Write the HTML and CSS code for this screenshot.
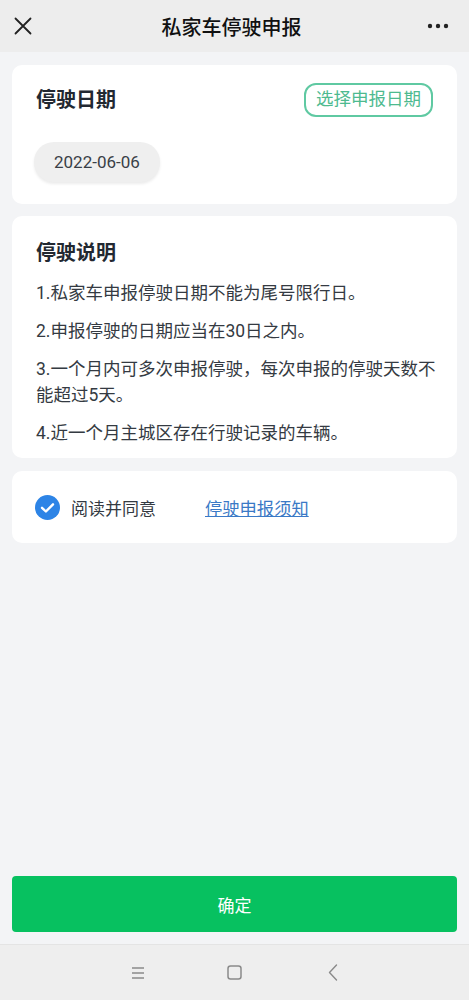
FILE: index.html
```html
<!DOCTYPE html>
<html>
<head>
    <meta charset="utf-8">
    <title>私家车停驶申报</title>
    <link rel="stylesheet" href="styles.css">
</head>
<body>
    <div class="page">
        <div class="topbar">
            <span class="close-icon">
                <svg width="18" height="18" viewBox="0 0 18 18"><path d="M1.5 1.5 L16.5 16.5 M16.5 1.5 L1.5 16.5" stroke="#222" stroke-width="1.8" fill="none" stroke-linecap="round"/></svg>
            </span>
            <div class="topbar-title">私家车停驶申报</div>
            <span class="more-icon">
                <svg width="22" height="6" viewBox="0 0 22 6"><circle cx="3" cy="3" r="2.2" fill="#222"/><circle cx="11" cy="3" r="2.2" fill="#222"/><circle cx="19" cy="3" r="2.2" fill="#222"/></svg>
            </span>
        </div>

        <div class="content">
            <div class="card date-card">
                <div class="card-row">
                    <div class="card-title">停驶日期</div>
                    <button class="pick-btn">选择申报日期</button>
                </div>
                <div class="date-pill">2022-06-06</div>
            </div>

            <div class="card notes-card">
                <div class="card-title">停驶说明</div>
                <p>1.私家车申报停驶日期不能为尾号限行日。</p>
                <p>2.申报停驶的日期应当在30日之内。</p>
                <p>3.一个月内可多次申报停驶，每次申报的停驶天数不能超过5天。</p>
                <p>4.近一个月主城区存在行驶记录的车辆。</p>
            </div>

            <div class="card agree-card">
                <span class="check">
                    <svg width="25" height="25" viewBox="0 0 25 25"><circle cx="12.5" cy="12.5" r="12.5" fill="#2d84e6"/><path d="M7 12.8 L10.9 16.5 L18 9.3" stroke="#fff" stroke-width="2.4" fill="none" stroke-linecap="round" stroke-linejoin="round"/></svg>
                </span>
                <span class="agree-text">阅读并同意</span>
                <a class="agree-link" href="#">停驶申报须知</a>
            </div>
        </div>

        <div class="footer">
            <button class="confirm-btn">确定</button>
        </div>

        <div class="navbar">
            <svg class="nav-menu" width="14" height="14" viewBox="0 0 14 14"><path d="M1 2 H13 M1 7 H13 M1 12 H13" stroke="#8a8a8a" stroke-width="1.4" fill="none"/></svg>
            <svg class="nav-home" width="15" height="15" viewBox="0 0 15 15"><rect x="1" y="1" width="13" height="13" rx="2.5" stroke="#8a8a8a" stroke-width="1.5" fill="none"/></svg>
            <svg width="10" height="17" viewBox="0 0 10 17"><path d="M8.5 1 L1.5 8.5 L8.5 16" stroke="#8a8a8a" stroke-width="1.4" fill="none" stroke-linecap="round" stroke-linejoin="round"/></svg>
        </div>
    </div>
</body>
</html>
```

FILE: styles.css
```css
* {
    box-sizing: border-box;
}
body {
    margin: 0;
    background: #f3f4f6;
    font-family: Roboto, "Noto Sans CJK SC", sans-serif;
    color: #343a42;
}
.page {
    height: 1000px;
    display: flex;
    flex-direction: column;
}
.topbar {
    height: 52px;
    background: #ededed;
    display: flex;
    align-items: center;
    justify-content: space-between;
    padding: 0 20px 0 14px;
    flex-shrink: 0;
}
.close-icon,
.more-icon {
    display: flex;
    width: 30px;
}
.more-icon {
    justify-content: flex-end;
}
.topbar-title {
    font-size: 20px;
    font-weight: 500;
    color: #111;
}
.content {
    padding: 13px 12px 0;
    display: flex;
    flex-direction: column;
    gap: 12px;
    flex: 1;
}
.card {
    background: #fff;
    border-radius: 10px;
}
.date-card {
    padding: 18px 24px 22px;
}
.card-row {
    display: flex;
    justify-content: space-between;
    align-items: center;
}
.card-title {
    font-size: 20px;
    font-weight: 700;
    color: #222831;
    line-height: 28px;
}
.pick-btn {
    height: 34px;
    padding: 0 10px;
    background: #fff;
    border: 2px solid #5fc9a2;
    border-radius: 12px;
    color: #4dba8f;
    font-family: inherit;
    font-size: 17.5px;
    line-height: 1;
}
.date-pill {
    display: inline-block;
    margin-top: 25px;
    margin-left: -2px;
    height: 40px;
    line-height: 40px;
    padding: 0 20px;
    background: #efefef;
    border-radius: 20px;
    box-shadow: 0 2px 3px rgba(0, 0, 0, 0.08);
    font-size: 17px;
    color: #3a3f47;
}
.notes-card {
    padding: 23px 20px 12px 24px;
}
.notes-card .card-title {
    margin-bottom: 13px;
}
.notes-card p {
    margin: 0 0 12px;
    font-size: 17.5px;
    line-height: 26px;
}
.notes-card p:last-child {
    margin-bottom: 0;
}
.agree-card {
    height: 72px;
    display: flex;
    align-items: center;
    padding: 0 23px;
    margin-top: 1px;
}
.check {
    display: flex;
    margin-right: 11px;
}
.agree-text {
    font-size: 17px;
}
.agree-link {
    margin-left: 49px;
    font-size: 17.3px;
    color: #3a79c6;
    text-decoration: underline;
}
.footer {
    padding: 0 12px 12px;
}
.confirm-btn {
    width: 100%;
    height: 56px;
    border: none;
    border-radius: 4px;
    background: #07c160;
    color: #fff;
    font-family: inherit;
    font-size: 17px;
}
.navbar {
    height: 56px;
    background: #eeeeee;
    border-top: 1px solid #e4e4e4;
    display: flex;
    align-items: center;
    justify-content: center;
    flex-shrink: 0;
}
.nav-menu {
    margin-right: 82px;
}
.nav-home {
    margin-right: 86px;
}
```
